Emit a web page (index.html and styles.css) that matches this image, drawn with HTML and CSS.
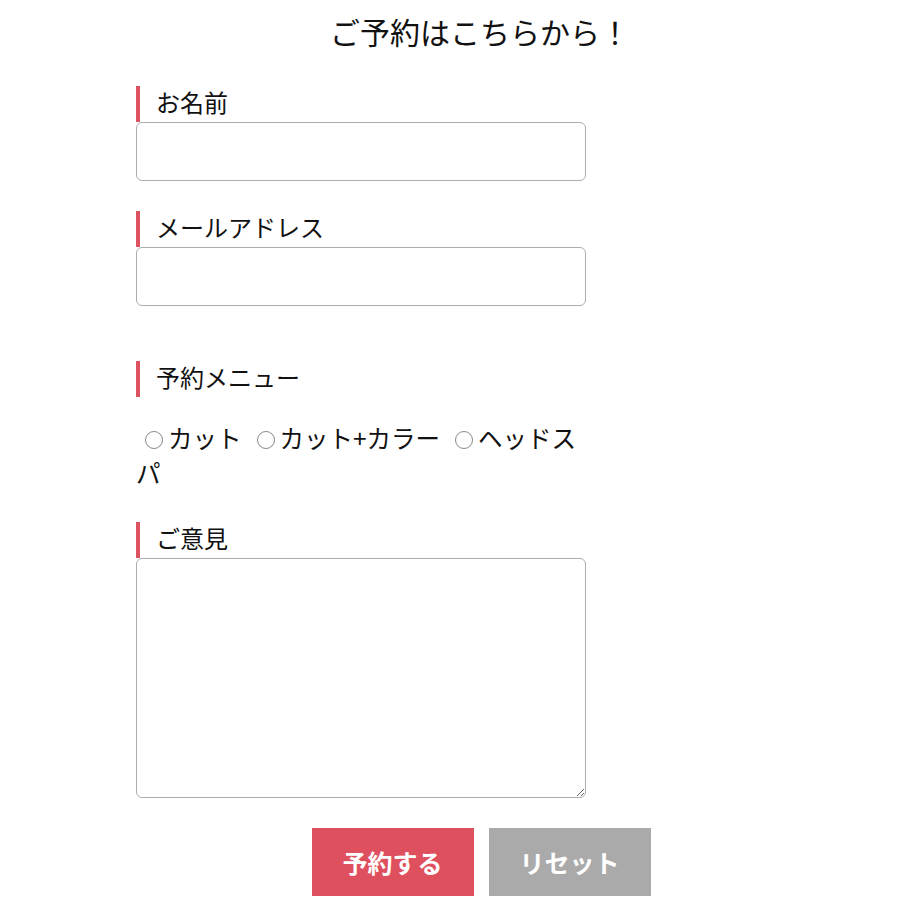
FILE: index.html
```html
<!DOCTYPE html>
<html lang="ja">
<head>
<meta charset="utf-8">
<link rel="stylesheet" href="styles.css">
</head>
<body>
<div class="page">
  <h1 class="title">ご予約はこちらから！</h1>
  <form class="form">
    <div class="field">
      <label class="label">お名前</label>
      <input class="input" type="text">
    </div>
    <div class="field">
      <label class="label">メールアドレス</label>
      <input class="input" type="email">
    </div>
    <div class="field field-menu">
      <label class="label">予約メニュー</label>
      <div class="radios"><input class="radio first" type="radio" name="m">カット<input class="radio" type="radio" name="m">カット+カラー<input class="radio" type="radio" name="m">ヘッドスパ</div>
    </div>
    <div class="field">
      <label class="label">ご意見</label>
      <textarea class="textarea"></textarea>
    </div>
    <div class="buttons">
      <button type="button" class="btn btn-submit">予約する</button>
      <button type="reset" class="btn btn-reset">リセット</button>
    </div>
  </form>
</div>
</body>
</html>
```
FILE: styles.css
```css
html, body {
  margin: 0;
  padding: 0;
  background: #fff;
}
body {
  font-family: "Noto Sans CJK JP", "Noto Sans", sans-serif;
  color: #111;
}
.page {
  width: 688px;
  padding: 0 0 0 136px;
}
.title {
  margin: 0;
  padding-top: 10px;
  height: 86px;
  box-sizing: border-box;
  font-size: 30px;
  font-weight: 400;
  line-height: 42px;
  text-align: center;
}
.form {
  width: 688px;
}
.field {
  width: 450px;
  margin-bottom: 30px;
}
.field-menu {
  margin-top: 55px;
  margin-bottom: 0;
}
.label {
  display: block;
  box-sizing: border-box;
  border-left: 4px solid #dd5260;
  padding: 0 0 5px 16px;
  font-size: 24px;
  line-height: 31px;
  height: 36px;
  margin: 0;
}
.input {
  display: block;
  box-sizing: border-box;
  width: 450px;
  height: 59px;
  border: 1px solid #adadad;
  border-radius: 6px;
  margin: 0;
  font-size: 20px;
}
.radios {
  margin-top: 23px;
  margin-bottom: 32px;
  font-size: 24.5px;
  line-height: 35px;
}
.radio {
  appearance: none;
  -webkit-appearance: none;
  display: inline-block;
  width: 18px;
  min-width: 18px;
  height: 18px;
  border: 1px solid #8a8a8a;
  border-radius: 50%;
  margin: 0 5px 0 15px;
  padding: 0;
  box-sizing: border-box;
  vertical-align: -1px;
  background: #fff;
}
.radio.first {
  margin-left: 9px;
}
.textarea {
  display: block;
  box-sizing: border-box;
  width: 450px;
  height: 240px;
  border: 1px solid #adadad;
  border-radius: 6px;
  margin: 0;
  resize: both;
}
.buttons {
  display: flex;
  justify-content: center;
  gap: 15px;
  width: 690px;
}
.btn {
  width: 162px;
  height: 68px;
  border: none;
  color: #fff;
  font-family: "Noto Sans CJK JP", "Noto Sans", sans-serif;
  font-size: 25px;
  font-weight: 700;
  cursor: pointer;
}
.btn-submit {
  background: #df505e;
}
.btn-reset {
  background: #aaaaaa;
}
```
